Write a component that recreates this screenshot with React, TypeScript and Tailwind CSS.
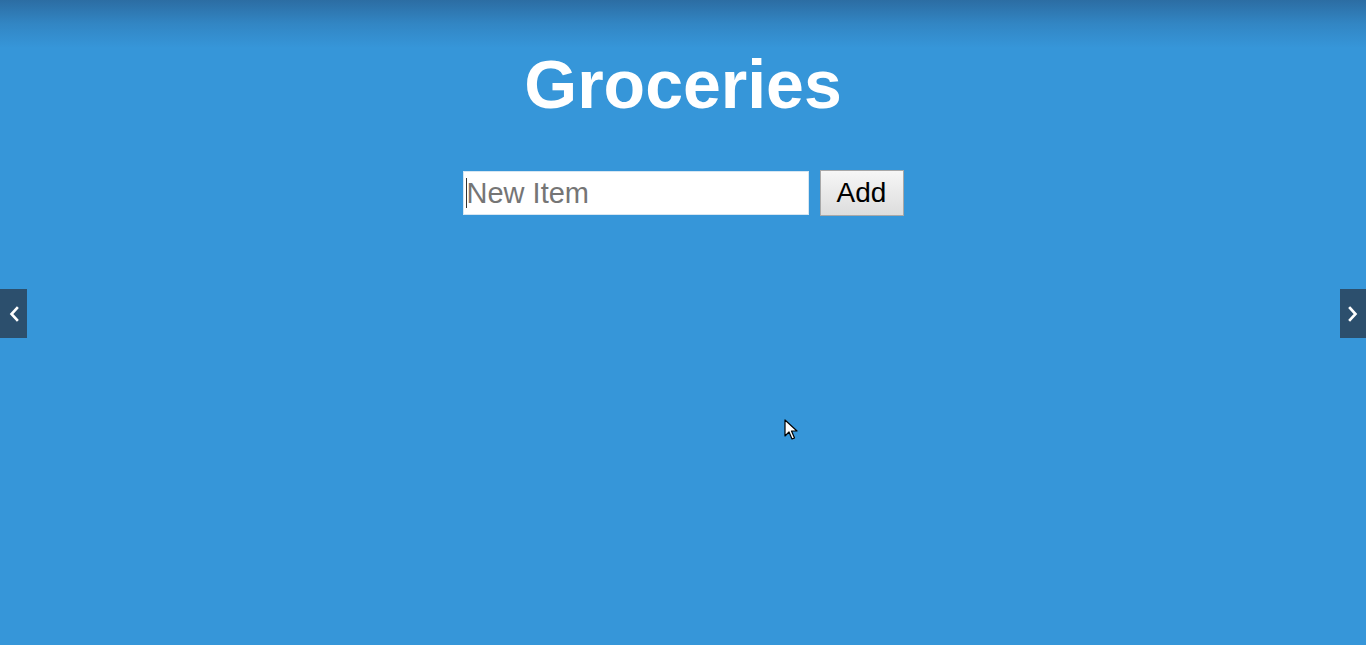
import React from "react";

const App = () => {
  return (
    <div
      className="relative w-full h-[645px] overflow-hidden bg-[#3696d9]"
      style={{ fontFamily: '"Liberation Sans", Arial, sans-serif' }}
    >
      <div className="absolute inset-x-0 top-0 h-[48px] bg-gradient-to-b from-[#2c6da3] via-[#3286c4] to-[#3696d9]" />

      <div className="relative flex flex-col items-center">
        <h1 className="pt-[50px] text-[68px] leading-none font-bold text-white">Groceries</h1>

        <form className="mt-[52px] flex items-center gap-[11px]" onSubmit={(e) => e.preventDefault()}>
          <div className="relative">
            <input
              type="text"
              placeholder="New Item"
              className="w-[346px] h-[44px] bg-white border border-[#d6e6f2] pl-[3px] text-[29px] text-black placeholder:text-[#757575] outline-none"
            />
            <span className="absolute left-[3px] top-[7px] h-[30px] w-px bg-[#333]" />
          </div>
          <button
            type="submit"
            className="w-[84px] h-[46px] border border-[#a8a8a8] bg-gradient-to-b from-[#f6f6f6] to-[#dddddd] text-[28px] text-black"
          >
            Add
          </button>
        </form>
      </div>

      <button className="absolute left-0 top-[289px] w-[27px] h-[49px] bg-[#2c4f6d] flex items-center justify-center">
        <svg width="12" height="18" viewBox="0 0 12 18" fill="none" stroke="white" strokeWidth="2.6" strokeLinecap="square">
          <path d="M9 3 L3.5 9 L9 15" />
        </svg>
      </button>
      <button className="absolute right-0 top-[289px] w-[26px] h-[49px] bg-[#2c4f6d] flex items-center justify-center">
        <svg width="12" height="18" viewBox="0 0 12 18" fill="none" stroke="white" strokeWidth="2.6" strokeLinecap="square">
          <path d="M3 3 L8.5 9 L3 15" />
        </svg>
      </button>

      <svg className="absolute left-[784px] top-[419px]" width="16" height="24" viewBox="0 0 16 24">
        <path d="M1 1 L1 17 L5 13 L8 20 L10.5 19 L7.5 12 L13 12 Z" fill="white" stroke="black" strokeWidth="1.2" strokeLinejoin="round" />
      </svg>
    </div>
  );
};

export default App;
